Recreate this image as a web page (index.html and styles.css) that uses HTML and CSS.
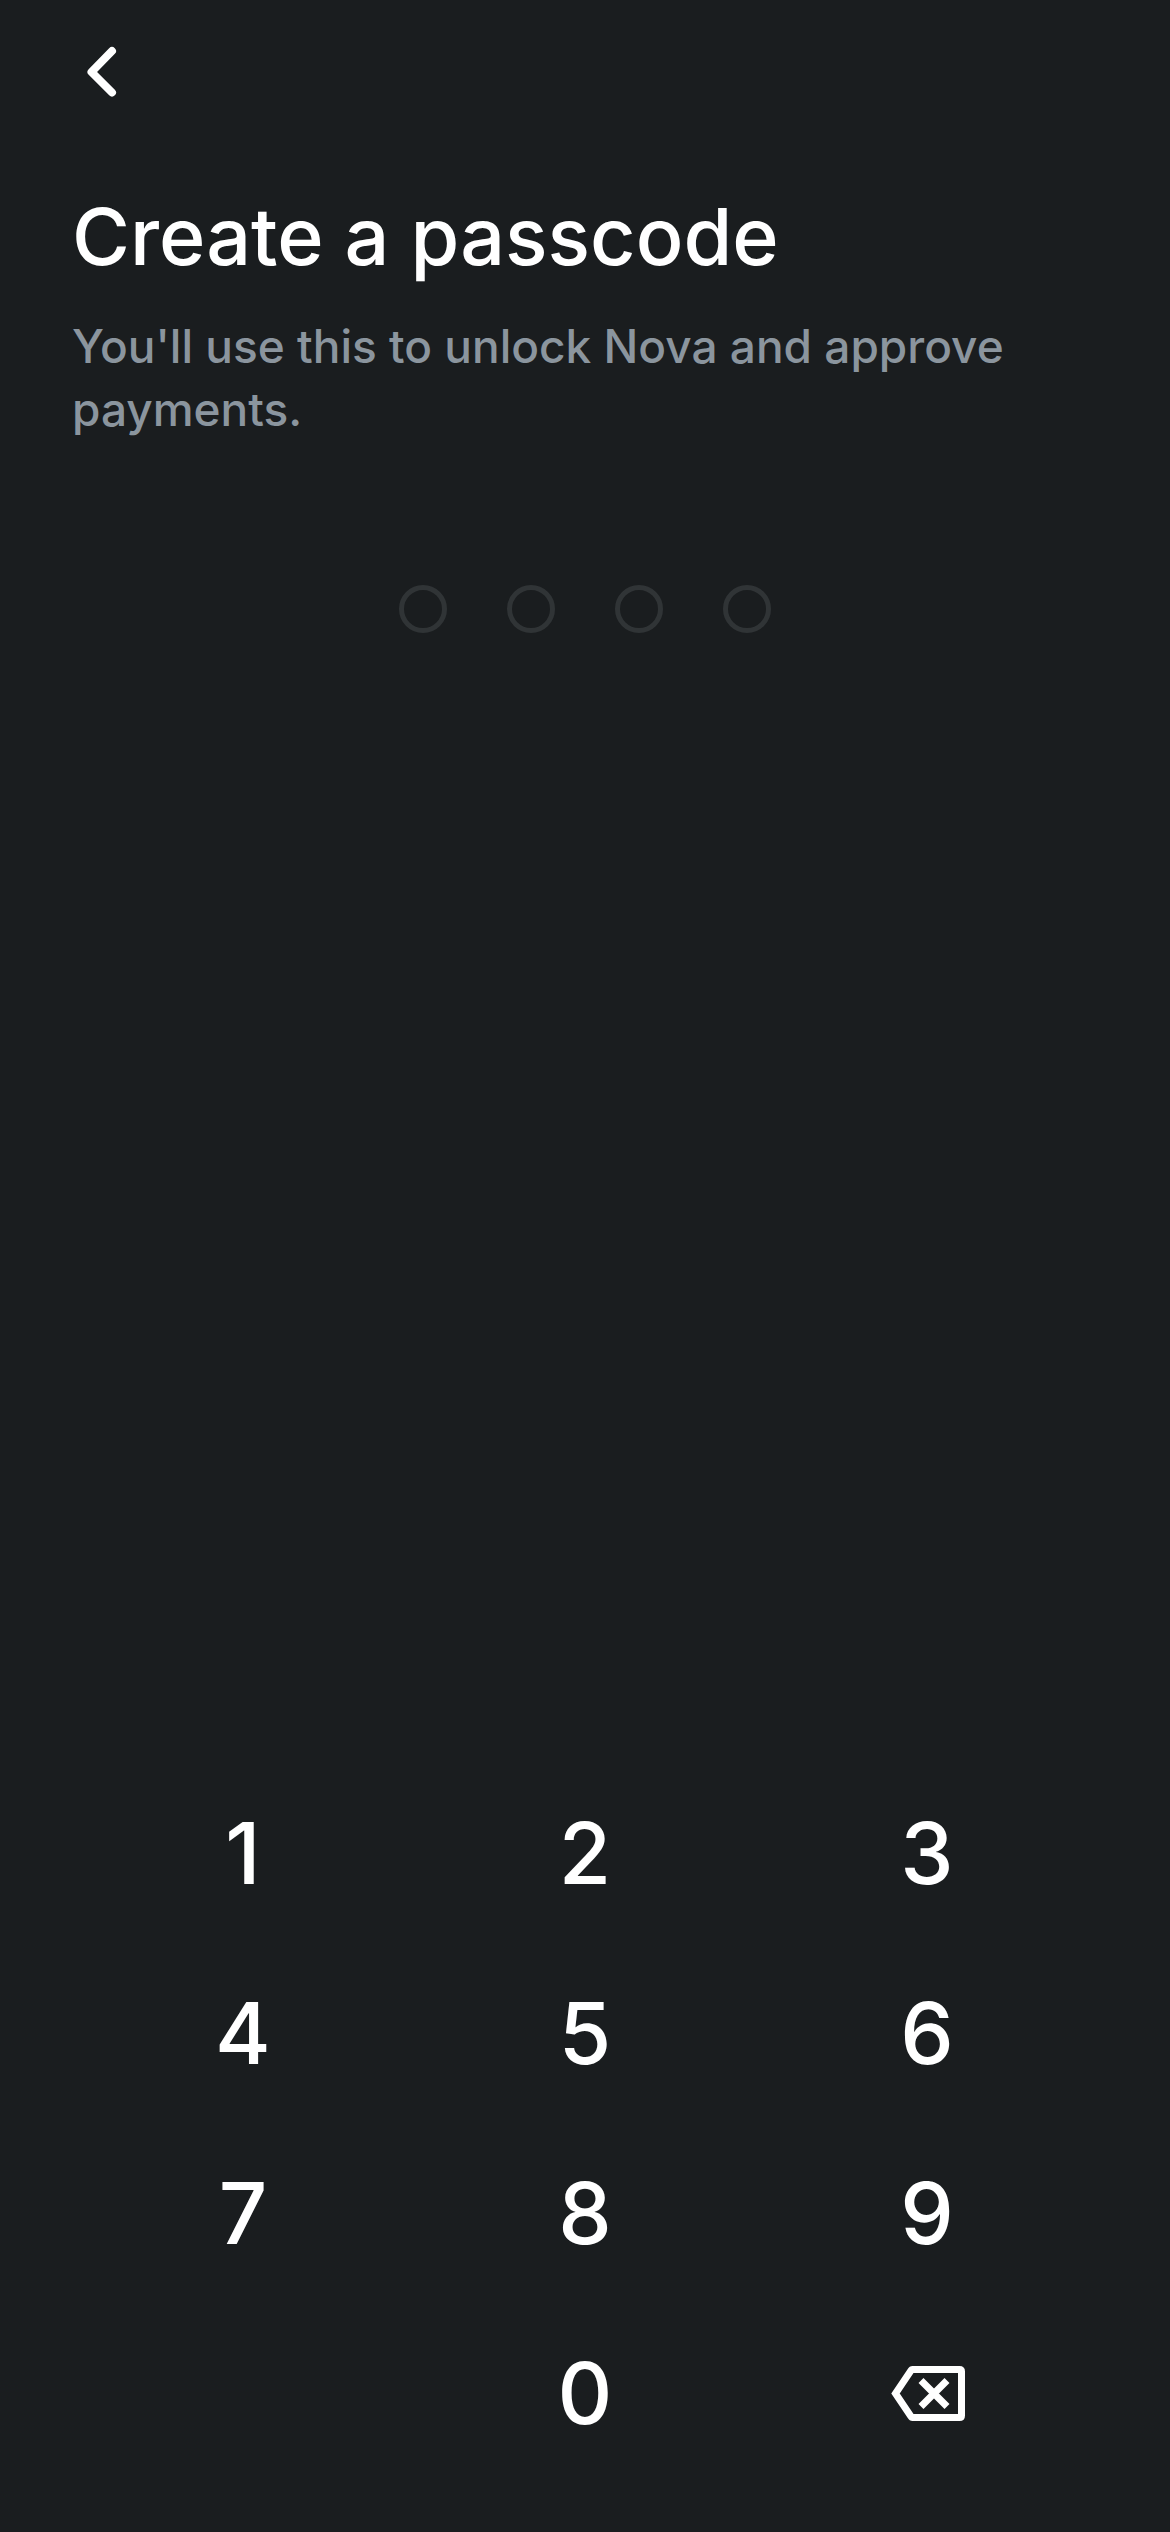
FILE: index.html
```html
<!DOCTYPE html>
<html lang="en">
<head>
    <meta charset="UTF-8">
    <meta name="viewport" content="width=device-width, initial-scale=1.0">
    <title>Create a passcode</title>
    <link rel="stylesheet" href="styles.css">
</head>
<body>
    <header class="top-bar">
        <button class="back-button" type="button" aria-label="Back">
            <svg width="60" height="60" viewBox="0 0 60 60" fill="none" stroke="currentColor" stroke-width="8" stroke-linecap="round" stroke-linejoin="round">
                <path d="M40 9 L19.5 30 L40 50.5"/>
            </svg>
        </button>
    </header>

    <main class="content">
        <h1 class="title">Create a passcode</h1>
        <p class="subtitle">You'll use this to unlock Nova and approve payments.</p>
        <div class="dots" role="img" aria-label="0 of 4 digits entered">
            <span class="dot"></span>
            <span class="dot"></span>
            <span class="dot"></span>
            <span class="dot"></span>
        </div>
    </main>

    <div class="keypad">
        <button class="key" type="button">1</button>
        <button class="key" type="button">2</button>
        <button class="key" type="button">3</button>
        <button class="key" type="button">4</button>
        <button class="key" type="button">5</button>
        <button class="key" type="button">6</button>
        <button class="key" type="button">7</button>
        <button class="key" type="button">8</button>
        <button class="key" type="button">9</button>
        <button class="key key-zero" type="button">0</button>
        <button class="key" type="button" aria-label="Delete">
            <svg width="76" height="60" viewBox="0 0 76 60" fill="none" stroke="currentColor" stroke-width="7">
                <path d="M23.5 6.5 H70.5 Q72.5 6.5 72.5 8.5 V52.5 Q72.5 54.5 70.5 54.5 H23.5 Q22.5 54.5 22 53.5 L6.5 30.5 L22 7.5 Q22.5 6.5 23.5 6.5 Z"/>
                <path d="M32 17.5 L58 43.5 M58 17.5 L32 43.5"/>
            </svg>
        </button>
    </div>
</body>
</html>
```
FILE: styles.css
```css
* {
    box-sizing: border-box;
}
body {
    margin: 0;
    min-height: 100vh;
    display: flex;
    flex-direction: column;
    background-color: #1a1d1f;
    color: white;
    font-family: Inter, sans-serif;
}
button {
    padding: 0;
    border: none;
    background: none;
    color: inherit;
    font-family: inherit;
    cursor: pointer;
}
.top-bar {
    padding: 42px 72px;
}
.back-button {
    display: block;
    width: 60px;
    height: 60px;
}
.content {
    flex: 1;
    padding: 44px 72px 0;
}
.title {
    margin: 0;
    font-size: 79px;
    font-weight: 500;
    line-height: 96px;
}
.subtitle {
    margin: 31px 0 0;
    color: #8b959e;
    font-size: 46px;
    font-weight: 500;
    line-height: 63px;
}
.dots {
    display: flex;
    justify-content: center;
    gap: 60px;
    margin-top: 144px;
}
.dot {
    width: 48px;
    height: 48px;
    border: 5px solid #303436;
    border-radius: 50%;
}
.keypad {
    display: grid;
    grid-template-columns: repeat(3, 1fr);
    grid-auto-rows: 180px;
    padding: 0 72px 49px;
}
.key {
    display: flex;
    justify-content: center;
    align-items: center;
    font-size: 85px;
    font-weight: 500;
}
.key-zero {
    grid-column: 2;
}
```
